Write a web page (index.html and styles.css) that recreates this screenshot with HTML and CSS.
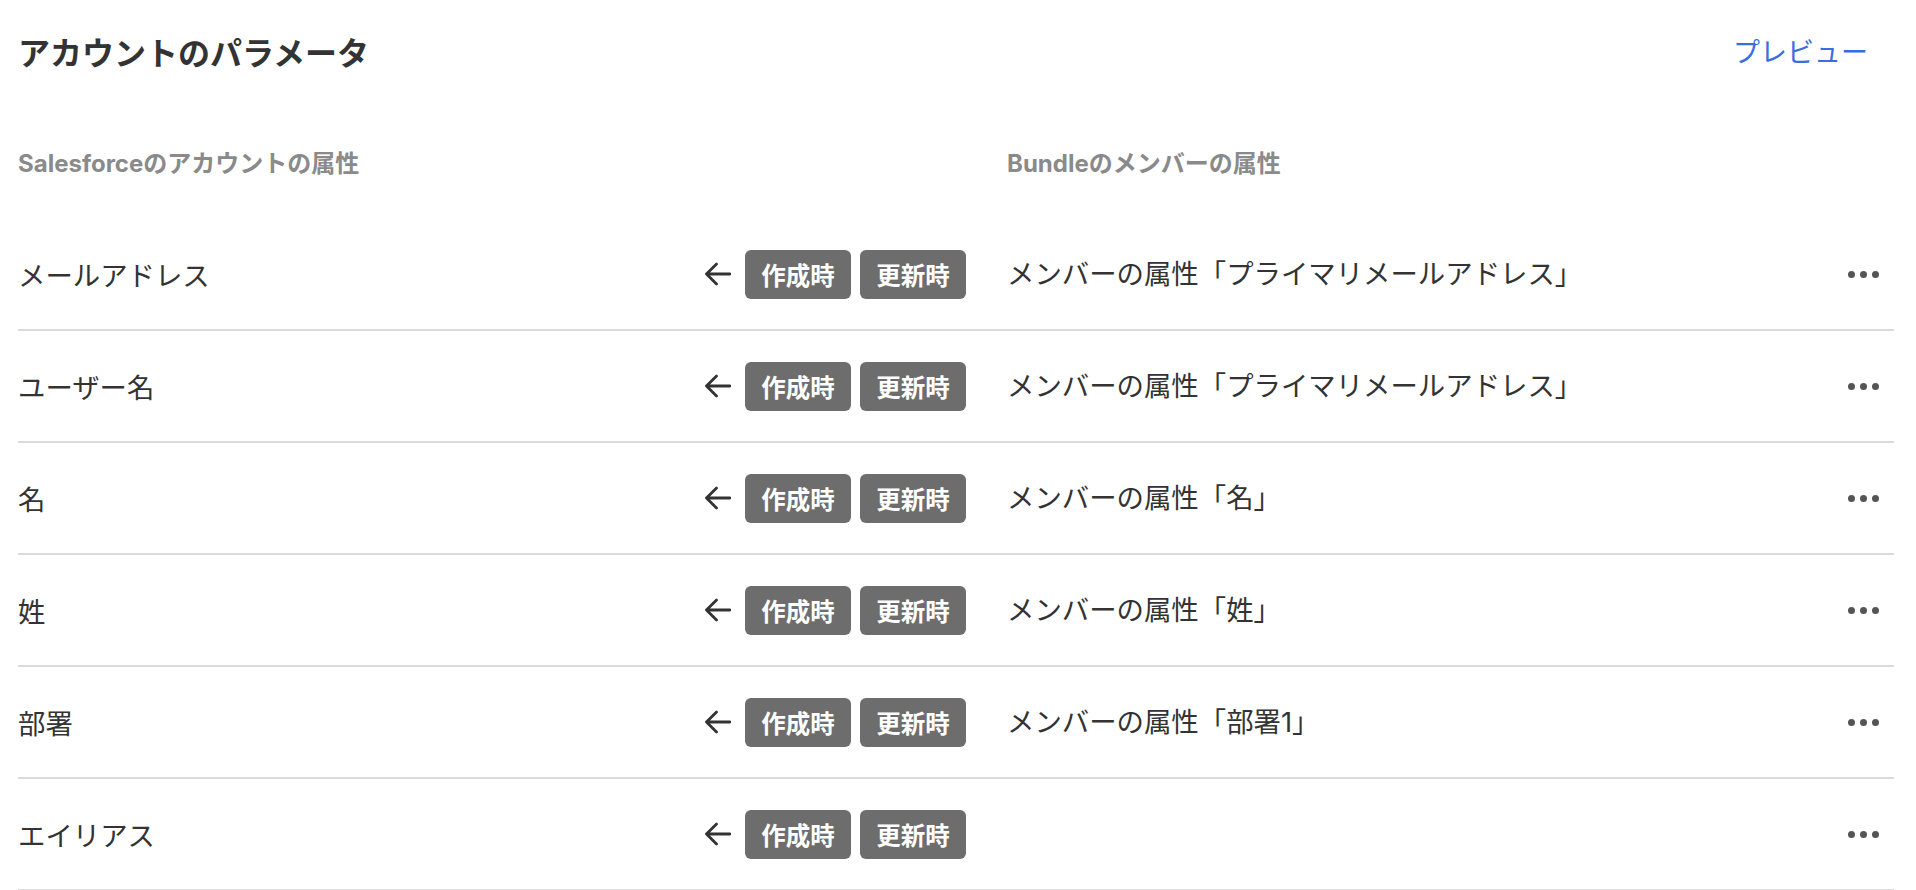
FILE: index.html
```html
<!DOCTYPE html>
<html lang="ja">
<head>
<meta charset="utf-8">
<title>アカウントのパラメータ</title>
<link rel="stylesheet" href="styles.css">
</head>
<body>
<div class="page">
  <header class="top">
    <h1 class="title">アカウントのパラメータ</h1>
    <a class="preview" href="#">プレビュー</a>
  </header>

  <div class="grid colheads">
    <div class="colhead">Salesforceのアカウントの属性</div>
    <div class="colhead">Bundleのメンバーの属性</div>
  </div>

  <div class="rows">
    <div class="grid row">
      <div class="left">
        <span class="label">メールアドレス</span>
        <svg class="arrow" viewBox="0 0 27 24" width="27" height="24"><path d="M26 12H2.5M12.5 2L2.5 12L12.5 22"/></svg>
        <span class="tag">作成時</span><span class="tag">更新時</span>
      </div>
      <div class="right">
        <span class="value">メンバーの属性「プライマリメールアドレス」</span>
        <span class="dots"><i></i><i></i><i></i></span>
      </div>
    </div>
    <div class="grid row">
      <div class="left">
        <span class="label">ユーザー名</span>
        <svg class="arrow" viewBox="0 0 27 24" width="27" height="24"><path d="M26 12H2.5M12.5 2L2.5 12L12.5 22"/></svg>
        <span class="tag">作成時</span><span class="tag">更新時</span>
      </div>
      <div class="right">
        <span class="value">メンバーの属性「プライマリメールアドレス」</span>
        <span class="dots"><i></i><i></i><i></i></span>
      </div>
    </div>
    <div class="grid row">
      <div class="left">
        <span class="label">名</span>
        <svg class="arrow" viewBox="0 0 27 24" width="27" height="24"><path d="M26 12H2.5M12.5 2L2.5 12L12.5 22"/></svg>
        <span class="tag">作成時</span><span class="tag">更新時</span>
      </div>
      <div class="right">
        <span class="value">メンバーの属性「名」</span>
        <span class="dots"><i></i><i></i><i></i></span>
      </div>
    </div>
    <div class="grid row">
      <div class="left">
        <span class="label">姓</span>
        <svg class="arrow" viewBox="0 0 27 24" width="27" height="24"><path d="M26 12H2.5M12.5 2L2.5 12L12.5 22"/></svg>
        <span class="tag">作成時</span><span class="tag">更新時</span>
      </div>
      <div class="right">
        <span class="value">メンバーの属性「姓」</span>
        <span class="dots"><i></i><i></i><i></i></span>
      </div>
    </div>
    <div class="grid row">
      <div class="left">
        <span class="label">部署</span>
        <svg class="arrow" viewBox="0 0 27 24" width="27" height="24"><path d="M26 12H2.5M12.5 2L2.5 12L12.5 22"/></svg>
        <span class="tag">作成時</span><span class="tag">更新時</span>
      </div>
      <div class="right">
        <span class="value">メンバーの属性「部署1」</span>
        <span class="dots"><i></i><i></i><i></i></span>
      </div>
    </div>
    <div class="grid row">
      <div class="left">
        <span class="label">エイリアス</span>
        <svg class="arrow" viewBox="0 0 27 24" width="27" height="24"><path d="M26 12H2.5M12.5 2L2.5 12L12.5 22"/></svg>
        <span class="tag">作成時</span><span class="tag">更新時</span>
      </div>
      <div class="right">
        <span class="value"></span>
        <span class="dots"><i></i><i></i><i></i></span>
      </div>
    </div>
  </div>
</div>
</body>
</html>
```

FILE: styles.css
```css
html, body {
  margin: 0;
  padding: 0;
  background: #ffffff;
}

body {
  font-family: "Inter", "Noto Sans CJK JP", sans-serif;
  color: #333333;
  overflow: hidden;
}

.page {
  width: 1876px;
  padding-left: 18px;
}

.top {
  height: 102px;
  display: flex;
  align-items: center;
  justify-content: space-between;
}

.title {
  margin: 0;
  font-size: 32px;
  font-weight: 700;
  line-height: 44px;
  color: #333333;
  font-family: "Noto Sans CJK JP", sans-serif;
}

.preview {
  margin-right: 26px;
  font-size: 27px;
  line-height: 40px;
  color: #3a6ce4;
  text-decoration: none;
  font-family: "Noto Sans CJK JP", sans-serif;
}

.grid {
  display: grid;
  grid-template-columns: 948px 887px;
  column-gap: 41px;
}

.colheads {
  padding-top: 46px;
  padding-bottom: 39px;
}

.colhead {
  font-size: 24px;
  font-weight: 700;
  line-height: 32px;
  color: #8a8a8a;
}

.row {
  height: 112px;
  box-sizing: border-box;
  border-bottom: 2px solid #dbdbdb;
  align-items: center;
}

.left {
  display: flex;
  align-items: center;
}

.label {
  flex: 1;
  font-size: 27.4px;
  line-height: 40px;
  font-family: "Noto Sans CJK JP", sans-serif;
}

.arrow {
  display: block;
  margin-right: 14px;
  fill: none;
  stroke: #333333;
  stroke-width: 2.8;
  stroke-linecap: round;
  stroke-linejoin: round;
}

.tag {
  width: 106px;
  height: 49px;
  box-sizing: border-box;
  display: flex;
  align-items: center;
  justify-content: center;
  background: #6d6d6d;
  color: #ffffff;
  border-radius: 6px;
  font-size: 24.5px;
  font-weight: 700;
  font-family: "Noto Sans CJK JP", sans-serif;
}

.tag + .tag {
  margin-left: 9px;
}

.right {
  display: flex;
  align-items: center;
  justify-content: space-between;
  padding-right: 15px;
}

.value {
  font-size: 27.4px;
  line-height: 40px;
  font-family: "Inter", "Noto Sans CJK JP", sans-serif;
}

.dots {
  display: flex;
  gap: 5px;
}

.dots i {
  display: block;
  width: 7px;
  height: 7px;
  border-radius: 50%;
  background: #555555;
}
```
